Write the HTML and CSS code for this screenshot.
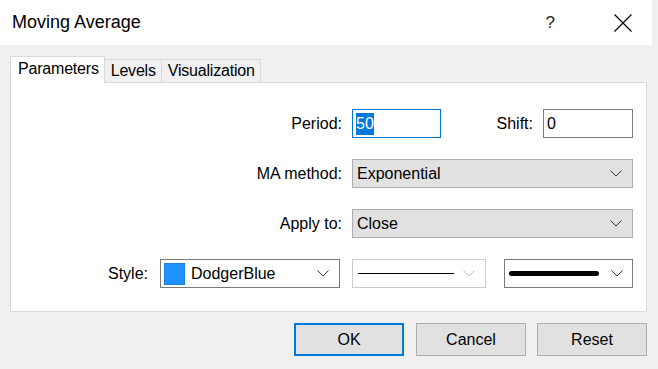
FILE: index.html
```html
<!DOCTYPE html>
<html>
<head>
    <title>Moving Average</title>
    <link rel="stylesheet" href="styles.css">
</head>
<body>
    <div class="dialog">
        <div class="titlebar">
            <div class="title">Moving Average</div>
            <div class="help">?</div>
            <svg class="close" width="18" height="18" viewBox="0 0 18 18">
                <path d="M0.5 0.5 L17.5 17.5 M17.5 0.5 L0.5 17.5" stroke="#000" stroke-width="1.2" fill="none"/>
            </svg>
        </div>

        <div class="tabs">
            <div class="tab active">Parameters</div>
            <div class="tab">Levels</div>
            <div class="tab">Visualization</div>
        </div>

        <div class="panel">
            <div class="row">
                <div class="lbl">Period:</div>
                <div class="input focused"><span class="sel-text">50</span></div>
                <div class="spacer"></div>
                <div class="lbl-inline">Shift:</div>
                <div class="input shift">0</div>
            </div>
            <div class="row">
                <div class="lbl">MA method:</div>
                <div class="select wide">
                    <span>Exponential</span>
                    <svg class="chev" width="12" height="7" viewBox="0 0 12 7"><path d="M0.5 0.5 L6 6 L11.5 0.5" stroke="#333" fill="none"/></svg>
                </div>
            </div>
            <div class="row">
                <div class="lbl">Apply to:</div>
                <div class="select wide">
                    <span>Close</span>
                    <svg class="chev" width="12" height="7" viewBox="0 0 12 7"><path d="M0.5 0.5 L6 6 L11.5 0.5" stroke="#333" fill="none"/></svg>
                </div>
            </div>
            <div class="row">
                <div class="lbl style-lbl">Style:</div>
                <div class="select color-select">
                    <div class="swatch"></div>
                    <span>DodgerBlue</span>
                    <svg class="chev" width="12" height="7" viewBox="0 0 12 7"><path d="M0.5 0.5 L6 6 L11.5 0.5" stroke="#333" fill="none"/></svg>
                </div>
                <div class="select line-select disabled">
                    <div class="line thin"></div>
                    <svg class="chev" width="12" height="7" viewBox="0 0 12 7"><path d="M0.5 0.5 L6 6 L11.5 0.5" stroke="#bbb" fill="none"/></svg>
                </div>
                <div class="select width-select">
                    <div class="line thick"></div>
                    <svg class="chev" width="12" height="7" viewBox="0 0 12 7"><path d="M0.5 0.5 L6 6 L11.5 0.5" stroke="#333" fill="none"/></svg>
                </div>
            </div>
        </div>

        <div class="buttons">
            <div class="btn default">OK</div>
            <div class="btn">Cancel</div>
            <div class="btn">Reset</div>
        </div>
    </div>
</body>
</html>
```

FILE: styles.css
```css
body {
    margin: 0;
    background: #f0f0f0;
    font-family: "Liberation Sans", Arial, sans-serif;
    font-size: 16px;
    color: #000;
    width: 658px;
    height: 369px;
    overflow: hidden;
}
.dialog {
    width: 652px;
}
.titlebar {
    height: 45px;
    background: #fff;
    display: flex;
    align-items: center;
    padding-left: 12px;
    box-sizing: border-box;
}
.title {
    font-size: 18px;
    flex: 1;
}
.help {
    font-size: 17px;
    color: #222;
    margin-right: 59px;
}
.close {
    margin-right: 20px;
}
.tabs {
    display: flex;
    align-items: flex-end;
    margin: 11px 0 0 10px;
    height: 26px;
}
.tab {
    height: 23px;
    line-height: 22px;
    padding: 0 5px 0 6px;
    letter-spacing: -0.2px;
    border: 1px solid #d9d9d9;
    border-bottom: none;
    border-left: none;
    box-sizing: border-box;
    background: #f0f0f0;
}
.tab.active {
    height: 27px;
    line-height: 24px;
    background: #fff;
    border-left: 1px solid #d9d9d9;
    padding: 0 5px 0 7px;
    margin-bottom: -1px;
    position: relative;
    z-index: 1;
}
.panel {
    margin-left: 10px;
    width: 637px;
    height: 230px;
    background: #fff;
    border: 1px solid #d9d9d9;
    box-sizing: border-box;
    padding-top: 26px;
    display: flex;
    flex-direction: column;
    gap: 20px;
}
.row {
    display: flex;
    align-items: center;
    height: 29px;
    width: 622px;
}
.row + .row {
    margin-top: 1px;
}
.lbl {
    width: 331px;
    text-align: right;
    margin-right: 10px;
}
.lbl.style-lbl {
    width: 137px;
    margin-right: 12px;
}
.spacer {
    flex: 1;
}
.lbl-inline {
    margin-right: 10px;
}
.input {
    height: 29px;
    box-sizing: border-box;
    border: 1px solid #7a7a7a;
    background: #fff;
    padding: 2px 3px;
    line-height: 23px;
    width: 89px;
}
.input.focused {
    border-color: #0078d7;
}
.input.shift {
    width: 90px;
}
.sel-text {
    background: #0078d7;
    color: #fff;
    display: inline-block;
    line-height: 22px;
}
.select {
    height: 29px;
    box-sizing: border-box;
    display: flex;
    align-items: center;
    border: 1px solid #adadad;
    background: #e1e1e1;
    padding: 0 10px 0 4px;
}
.select span {
    flex: 1;
}
.select.wide {
    width: 281px;
}
.color-select {
    width: 180px;
    background: #fff;
    border-color: #7a7a7a;
    padding-left: 3px;
    margin-right: 12px;
}
.swatch {
    width: 21px;
    height: 22px;
    background: #1e90ff;
    margin-right: 6px;
    box-shadow: inset 0 0 0 1px #1a80e6;
}
.line-select {
    width: 134px;
    background: #fff;
    border-color: #ccc;
    padding: 0 10px 0 5px;
    margin-right: 18px;
}
.width-select {
    width: 129px;
    background: #fff;
    border-color: #7a7a7a;
    padding: 0 9px 0 4px;
}
.line {
    background: #000;
}
.line.thin {
    width: 96px;
    height: 1px;
    margin-right: auto;
}
.line.thick {
    width: 90px;
    height: 5px;
    border-radius: 3px;
    margin-right: auto;
}
.buttons {
    display: flex;
    justify-content: flex-end;
    gap: 11px;
    margin-top: 11px;
    padding-right: 5px;
}
.btn {
    width: 110px;
    height: 33px;
    box-sizing: border-box;
    border: 1px solid #adadad;
    background: #e1e1e1;
    display: flex;
    align-items: center;
    justify-content: center;
}
.btn.default {
    border: 2px solid #0078d7;
    margin-right: 1px;
}
```
